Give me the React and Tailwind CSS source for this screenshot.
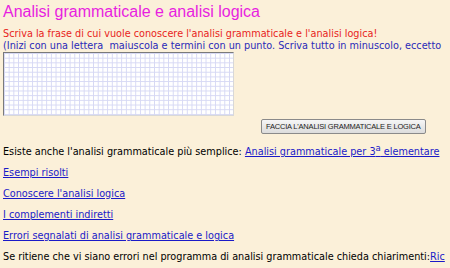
export default function App() {
  const link = "text-[#1a1ac8] underline";
  return (
    <div className="w-[450px] h-[268px] overflow-hidden bg-[#fbf0d9] font-['DejaVu_Sans',Verdana,sans-serif] text-[9.7px] text-black">
      <div className="px-[3px] pt-[3px]">
        <h1 className="font-['Liberation_Sans',Arial,sans-serif] text-[16px] leading-[18px] text-[#e81ee0]">
          Analisi grammaticale e analisi logica
        </h1>
        <p className="mt-[7px] leading-[12px] text-[#e8241c] whitespace-nowrap">
          Scriva la frase di cui vuole conoscere l'analisi grammaticale e l'analisi logica!
        </p>
        <p className="leading-[12px] text-[#2a2ab8] whitespace-nowrap">
          (Inizi con una lettera&nbsp; maiuscola e termini con un punto. Scriva tutto in minuscolo, eccetto
        </p>
        <textarea
          className="block w-[231px] h-[64px] resize-none border border-t-[#7a7a7a] border-l-[#7a7a7a] border-r-[#d8d8d8] border-b-[#d8d8d8] bg-white bg-[linear-gradient(to_right,#d6d8f4_1px,transparent_1px),linear-gradient(to_bottom,#d6d8f4_1px,transparent_1px)] bg-[size:4.7px_4.7px]"
        />
        <div className="flex pl-[258px] mt-[3px]">
          <button className="h-[15px] px-[4px] rounded-[2px] border border-[#8a8a8a] bg-[linear-gradient(#f6f6f6,#dcdcdc)] font-['Liberation_Sans',Arial,sans-serif] text-[7.5px] leading-[13px] text-[#222] tracking-[-0.2px] whitespace-nowrap">
            FACCIA L'ANALISI GRAMMATICALE E LOGICA
          </button>
        </div>
        <div className="mt-[12px] flex flex-col gap-[9px] leading-[12px]">
          <p className="whitespace-nowrap">
            Esiste anche l'analisi grammaticale più semplice:{" "}
            <a className={link}>
              Analisi grammaticale per 3<sup className="text-[8.5px] leading-none">a</sup> elementare
            </a>
          </p>
          <p><a className={link}>Esempi risolti</a></p>
          <p><a className={link}>Conoscere l'analisi logica</a></p>
          <p><a className={link}>I complementi indiretti</a></p>
          <p><a className={link}>Errori segnalati di analisi grammaticale e logica</a></p>
          <p className="whitespace-nowrap">
            Se ritiene che vi siano errori nel programma di analisi grammaticale chieda chiarimenti:<a className={link}>Ric</a>
          </p>
        </div>
      </div>
    </div>
  );
}
